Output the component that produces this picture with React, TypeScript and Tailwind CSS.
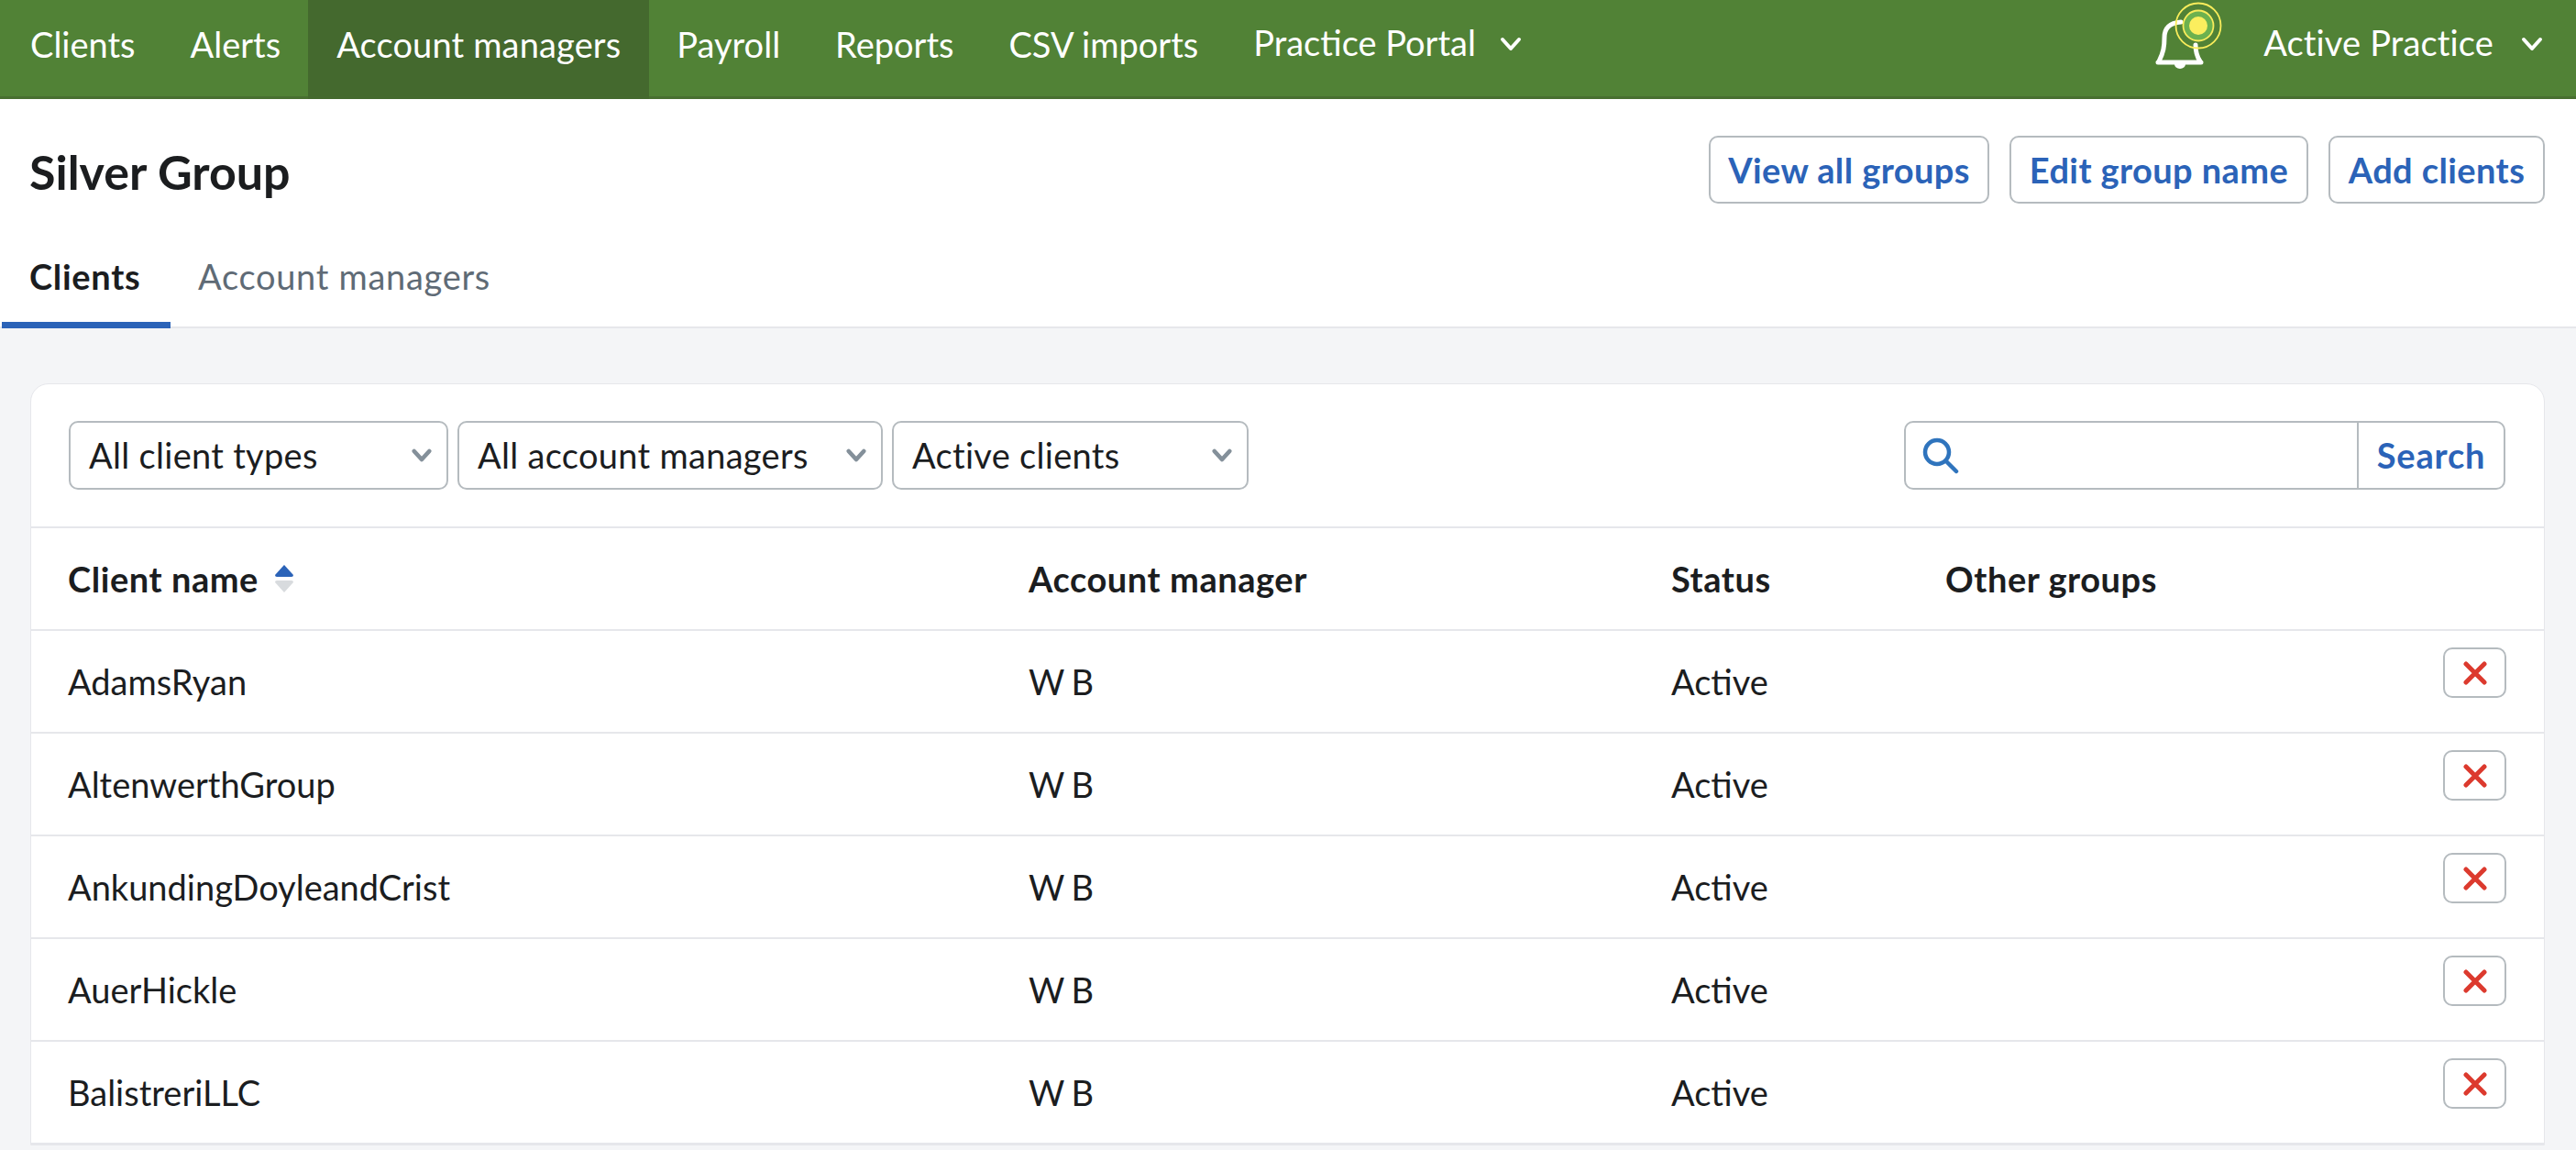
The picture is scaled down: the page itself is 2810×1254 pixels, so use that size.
import React from "react";

const nav = ["Clients", "Alerts", "Account managers", "Payroll", "Reports", "CSV imports"];
const rows = ["AdamsRyan", "AltenwerthGroup", "AnkundingDoyleandCrist", "AuerHickle", "BalistreriLLC"];

function Chevron({ cls, sw = "4" }: { cls: string; sw?: string }) {
  return (
    <svg viewBox="0 0 24 16" className={cls} fill="none" stroke="currentColor" strokeWidth={sw} strokeLinecap="round" strokeLinejoin="round">
      <path d="M3 3 L12 13 L21 3" />
    </svg>
  );
}

function Select({ label, w }: { label: string; w: string }) {
  return (
    <div className={`flex items-center justify-between h-[75px] rounded-[10px] border-2 border-[#b5bbbf] bg-white pl-[20px] pr-[16px] ${w}`}>
      <span className="text-[38px] tracking-[0.3px] text-[#1b1d1f]">{label}</span>
      <Chevron cls="w-[22px] h-[15px] text-[#84909a]" sw="5" />
    </div>
  );
}

function TopButton({ label, w }: { label: string; w: string }) {
  return (
    <button className={`h-[74px] rounded-[10px] border-2 border-[#b5bbbf] bg-white text-[38px] tracking-[0.4px] font-bold text-[#2b63b8] ${w}`}>{label}</button>
  );
}

export default function App() {
  return (
    <div className="w-[2810px] h-[1254px] overflow-hidden bg-[#f4f5f7] font-['Lato',sans-serif]">
      <header className="flex items-stretch justify-between h-[108px] bg-[#518236] border-b-[3px] border-[#486f30] text-white text-[38px]">
        <nav className="flex pl-[3px]">
          {nav.map((n) => (
            <a key={n} className={`flex items-center h-[108px] ${n === "Account managers" ? "px-[31px] bg-[#44692e] tracking-[0.15px]" : "px-[30px]"}`}>
              <span className="-mt-[12px]">{n}</span>
            </a>
          ))}
          <a className="flex items-center h-[105px] px-[30px] gap-[26px]">
            <span className="-mt-[12px]">Practice Portal</span>
            <Chevron cls="w-[24px] h-[16px] -mt-[10px]" />
          </a>
        </nav>
        <div className="flex items-center tracking-[0.15px]">
          <svg viewBox="0 0 80 80" className="w-[80px] h-[80px] mr-[43px] -mt-[23px]" fill="none">
            <path d="M8 67 L55 67 M9 66 C14 56 15 50 15 40 C15 30 20 24 33 23 M49 48 C49 56 50 60 54 66" stroke="#fff" strokeWidth="5" strokeLinecap="round" />
            <path d="M26 69 A6 5 0 0 0 38 69 Z" fill="#fff" />
            <circle cx="52" cy="27" r="24.5" stroke="#f9ec5b" strokeWidth="1.8" />
            <circle cx="52" cy="27" r="16.5" fill="#6cb14f" stroke="#f9ec5b" strokeWidth="1.8" />
            <circle cx="52" cy="27" r="10" fill="#fbee5e" />
          </svg>
          <span className="-mt-[12px]">Active Practice</span>
          <Chevron cls="w-[24px] h-[16px] ml-[30px] mr-[36px] -mt-[10px]" />
        </div>
      </header>

      <section className="flex flex-col justify-between bg-white border-b-2 border-[#e6e7eb] h-[250px]">
        <div className="flex justify-between pt-[40px] pl-[32px] pr-[34px]">
          <h1 className="text-[52px] font-bold text-[#1b1d1f] leading-[74px] mt-[2px]">Silver Group</h1>
          <div className="flex gap-[22px]">
            <TopButton label="View all groups" w="w-[306px]" />
            <TopButton label="Edit group name" w="w-[326px]" />
            <TopButton label="Add clients" w="w-[236px]" />
          </div>
        </div>
        <div className="flex pl-[2px] -mb-[2px] text-[38px] tracking-[0.7px]">
          <div className="w-[184px] h-[91px] pl-[30px] pt-[6px] font-bold text-[#1b1d1f] border-b-[7px] border-[#2b63b8]">Clients</div>
          <div className="pl-[30px] pt-[6px] text-[#5f6b76]">Account managers</div>
        </div>
      </section>

      <main className="mt-[60px] ml-[33px] mr-[34px] bg-white rounded-t-[20px] border border-[#e6e7eb]">
        <div className="flex justify-between items-center h-[157px] pl-[41px] pr-[42px] border-b-2 border-[#e6e7eb]">
          <div className="flex gap-[10px]">
            <Select label="All client types" w="w-[414px]" />
            <Select label="All account managers" w="w-[464px]" />
            <Select label="Active clients" w="w-[389px]" />
          </div>
          <div className="flex h-[75px] w-[656px] rounded-[10px] border-2 border-[#b5bbbf]">
            <div className="flex items-center flex-1 pl-[18px]">
              <svg viewBox="0 0 40 40" className="w-[40px] h-[40px]" fill="none" stroke="#2f74bd" strokeWidth="4.5" strokeLinecap="round">
                <circle cx="16" cy="16" r="13" />
                <path d="M26 26 L37 37" />
              </svg>
            </div>
            <div className="flex items-center justify-center w-[160px] border-l-2 border-[#b5bbbf] text-[38px] tracking-[0.8px] font-bold text-[#2b63b8]">Search</div>
          </div>
        </div>

        <div className="grid grid-cols-[1048px_701px_299px_1fr] items-center h-[112px] pl-[40px] border-b-2 border-[#e6e7eb] text-[38px] tracking-[0.55px] font-bold text-[#1b1d1f]">
          <div className="flex items-center gap-[18px]">
            Client name
            <svg viewBox="0 0 20 30" className="w-[20px] h-[30px]">
              <path d="M10 0 L20 11 Q20 13 18 13 L2 13 Q0 13 0 11 Z" fill="#2b63b8" />
              <path d="M10 30 L20 19 Q20 17 18 17 L2 17 Q0 17 0 19 Z" fill="#d8dbde" />
            </svg>
          </div>
          <div>Account manager</div>
          <div>Status</div>
          <div>Other groups</div>
        </div>

        {rows.map((r) => (
          <div key={r} className="grid grid-cols-[1048px_701px_299px_1fr] items-center h-[112px] pl-[40px] pr-[41px] border-b-2 border-[#e6e7eb] text-[38px] text-[#1b1d1f]">
            <div>{r}</div>
            <div className="tracking-[-1px]">W B</div>
            <div>Active</div>
            <div className="flex justify-end">
              <button className="flex items-center justify-center w-[69px] h-[55px] -mt-[19px] rounded-[10px] border-2 border-[#b5bbbf] bg-white">
                <svg viewBox="0 0 26 26" className="w-[26px] h-[26px]" stroke="#dc3a2e" strokeWidth="5" strokeLinecap="round">
                  <path d="M3 3 L23 23 M23 3 L3 23" />
                </svg>
              </button>
            </div>
          </div>
        ))}
      </main>
    </div>
  );
}
